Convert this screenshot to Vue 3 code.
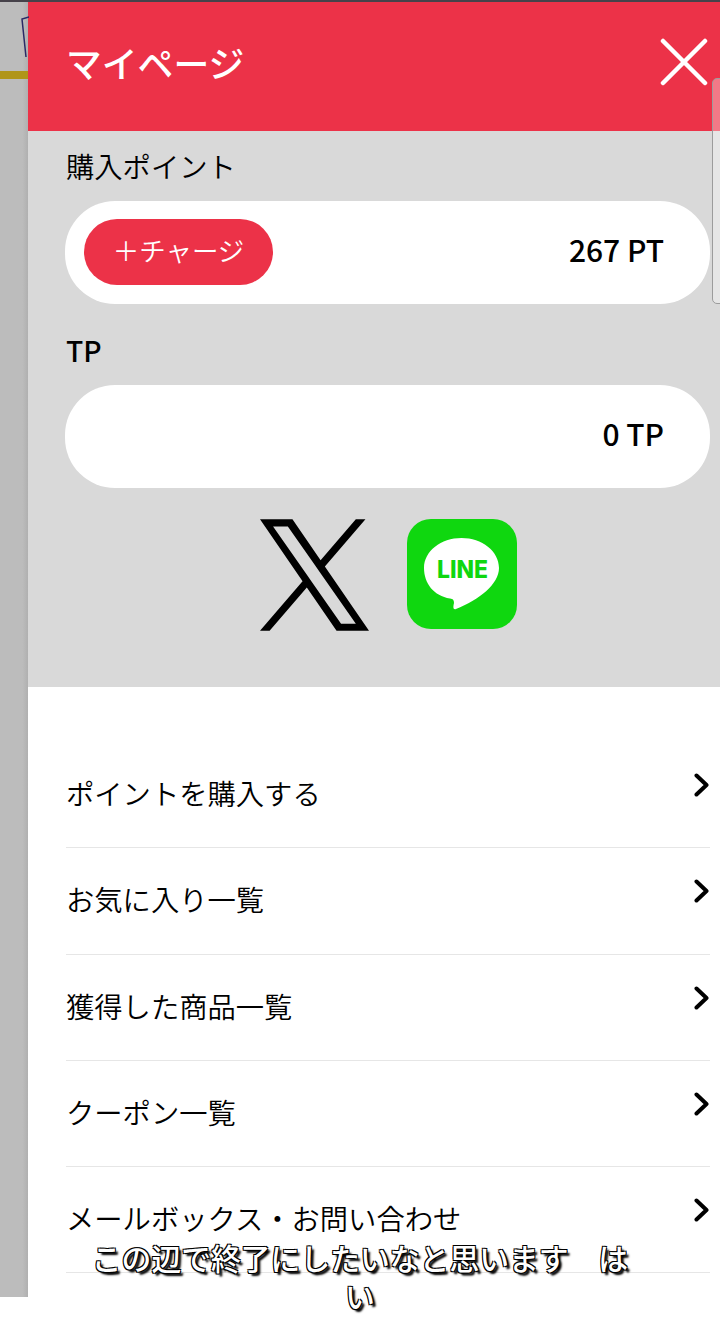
<script setup>
const menuItems = [
  'ポイントを購入する',
  'お気に入り一覧',
  '獲得した商品一覧',
  'クーポン一覧',
  'メールボックス・お問い合わせ',
]
</script>

<template>
  <div class="screen">
    <div class="backdrop">
      <svg class="backdrop-logo" width="8" height="42" viewBox="0 0 8 42">
        <path d="M8 1 L1 3 L5 41" fill="none" stroke="#2a2a66" stroke-width="1.5" />
      </svg>
      <div class="backdrop-line"></div>
    </div>

    <div class="panel">
      <header class="panel-head">
        <h1>マイページ</h1>
        <svg class="close" width="48" height="48" viewBox="0 0 48 48">
          <path d="M3 3 L45 45 M45 3 L3 45" stroke="#fff" stroke-width="4.500" stroke-linecap="round" />
        </svg>
      </header>

      <section class="wallet">
        <div class="label">購入ポイント</div>
        <div class="pill">
          <button class="charge">＋チャージ</button>
          <span class="amount">267 PT</span>
        </div>
        <div class="label label-tp">TP</div>
        <div class="pill">
          <span class="amount">0 TP</span>
        </div>
        <div class="social">
          <svg width="109" height="112" viewBox="0 0 1200 1227">
            <path fill="#000" d="M714.163 519.284L1160.89 0H1055.03L667.137 450.887L357.328 0H0L468.492 681.821L0 1226.37H105.866L515.491 750.218L842.672 1226.37H1200L714.137 519.284H714.163ZM569.165 687.828L521.697 619.934L144.011 79.6944H306.615L611.412 515.685L658.88 583.579L1055.08 1150.3H892.476L569.165 687.854V687.828Z" />
          </svg>
          <svg width="110" height="110" viewBox="0 0 110 110">
            <rect width="110" height="110" rx="24" fill="#0fd70f" />
            <path fill="#fff" d="M54.500 19 C75 19 92 32 92 49 C92 65 72 81 49 90 C46 91 46 88 47 84 C47 81 46 80 43 79.500 C27 77 17 64.500 17 49 C17 32 34 19 54.500 19 Z" />
            <text class="line-text" x="30" y="59" textLength="51" lengthAdjust="spacingAndGlyphs">LINE</text>
          </svg>
        </div>
      </section>

      <ul class="menu">
        <li v-for="item in menuItems" :key="item" class="menu-row">
          <span>{{ item }}</span>
          <svg width="15" height="24" viewBox="0 0 15 24">
            <path d="M2.500 2.500 L12.500 12 L2.500 21.500" fill="none" stroke="#000" stroke-width="4" stroke-linecap="round" stroke-linejoin="round" />
          </svg>
        </li>
      </ul>
    </div>

    <div class="scrollbar"></div>
    <p class="caption">この辺で終了にしたいなと思います　は<br>い</p>
  </div>
</template>

<style scoped>
.screen {
  position: relative;
  display: flex;
  width: 720px;
  height: 1327px;
  overflow: hidden;
  background: #fff;
  border-top: 2px solid #46424a;
  box-sizing: border-box;
  font-family: "Noto Sans CJK JP", "Noto Sans", sans-serif;
  color: #000;
}

.backdrop {
  position: relative;
  flex: 0 0 28px;
  height: 1295px;
  background: linear-gradient(to right, #bcbcbc 80%, #b0b0b0);
}

.backdrop-logo {
  position: absolute;
  left: 21px;
  top: 14px;
}

.backdrop-line {
  position: absolute;
  left: 0;
  right: 0;
  top: 69px;
  height: 8px;
  background: #b0951a;
}

.panel {
  flex: 1;
  min-width: 0;
}

.panel-head {
  display: flex;
  align-items: center;
  justify-content: space-between;
  box-sizing: border-box;
  height: 129px;
  padding: 0 12px 10px 38px;
  background: #ec3248;
}

.panel-head h1 {
  margin: 0;
  font-size: 35.800px;
  line-height: 48px;
  font-weight: 500;
  color: #fff;
}

.wallet {
  padding: 15px 10px 56px 37px;
  background: #d9d9d9;
}

.label {
  height: 40px;
  margin-bottom: 15px;
  padding-left: 1px;
  font-size: 28.300px;
  line-height: 39px;
  font-weight: 350;
}

.label-tp {
  margin-top: 28px;
  margin-bottom: 13px;
  line-height: 36px;
  font-weight: 500;
}

.pill {
  display: flex;
  align-items: center;
  justify-content: space-between;
  box-sizing: border-box;
  height: 103px;
  padding: 0 46px 0 19px;
  border-radius: 50px;
  background: #fff;
}

.charge {
  width: 189px;
  height: 66px;
  margin-bottom: 2px;
  padding: 0 0 5px;
  border: none;
  border-radius: 33px;
  background: #ec3248;
  color: #fff;
  font-family: inherit;
  font-size: 26.500px;
  font-weight: 350;
}

.amount {
  margin-left: auto;
  margin-bottom: 7px;
  font-size: 30px;
  font-weight: 500;
  color: #000;
}

.social {
  display: flex;
  justify-content: center;
  align-items: flex-start;
  gap: 38px;
  margin-top: 31px;
  padding-left: 1px;
}

.line-text {
  font-family: Inter, "Liberation Sans", sans-serif;
  font-size: 24px;
  font-weight: 800;
  fill: #0fd70f;
}

.menu {
  margin: 0;
  padding: 55px 10px 0 38px;
  list-style: none;
}

.menu-row {
  display: flex;
  align-items: flex-start;
  justify-content: space-between;
  box-sizing: border-box;
  height: 106.250px;
  padding: 31px 1px 0 0;
  border-bottom: 1px solid #e6e6e6;
  font-size: 28.300px;
  line-height: 40px;
  font-weight: 350;
}

.scrollbar {
  position: absolute;
  right: -5px;
  top: 76px;
  width: 11px;
  height: 224px;
  border: 1px solid #9c9c9c;
  border-radius: 5px;
  background: rgba(255, 255, 255, 0.35);
}

.caption {
  position: absolute;
  left: 0;
  right: 0;
  top: 1236px;
  margin: 0;
  text-align: center;
  font-size: 29.800px;
  line-height: 38px;
  font-weight: 500;
  color: #fff;
  text-shadow: -1px -1px 0 #000, 1px -1px 0 #000, -1px 1px 0 #000, 1px 1px 0 #000, 3px 3px 2px #000;
}
</style>

<style>
body {
  margin: 0;
}
</style>
